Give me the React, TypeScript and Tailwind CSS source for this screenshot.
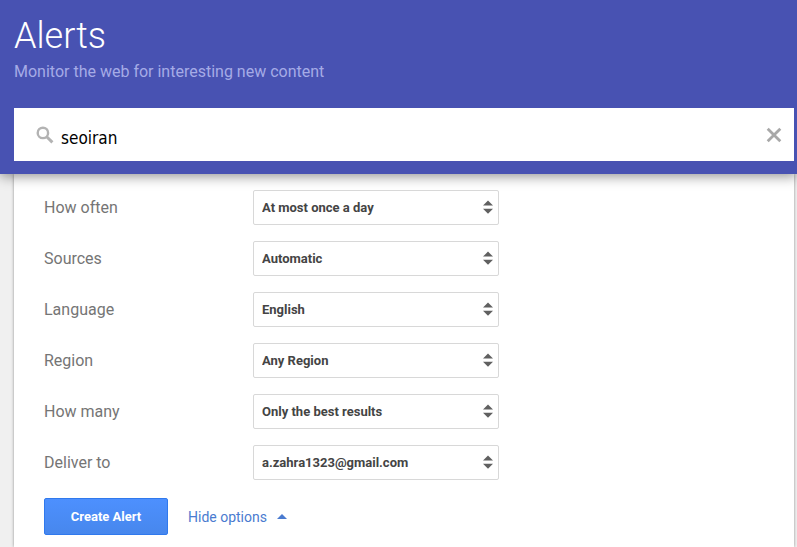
import React, { useState } from 'react';

interface AlertOption {
  id: string;
  label: string;
  choices: string[];
}

const alertOptions: AlertOption[] = [
  { id: 'frequency', label: 'How often', choices: ['At most once a day', 'As-it-happens', 'At most once a week'] },
  { id: 'sources', label: 'Sources', choices: ['Automatic', 'News', 'Blogs', 'Web', 'Video'] },
  { id: 'language', label: 'Language', choices: ['English', 'All Languages'] },
  { id: 'region', label: 'Region', choices: ['Any Region'] },
  { id: 'volume', label: 'How many', choices: ['Only the best results', 'All results'] },
  { id: 'delivery', label: 'Deliver to', choices: ['a.zahra1323@gmail.com', 'RSS feed'] },
];

function SelectArrows() {
  return (
    <svg className="pointer-events-none absolute right-1.5 top-2.5" width="10" height="14" viewBox="0 0 10 14" fill="#606060" aria-hidden="true">
      <path d="M0 5.6L5 0.6L10 5.6Z" />
      <path d="M0 8.8L5 13.8L10 8.8Z" />
    </svg>
  );
}

function OptionRow({ option }: { option: AlertOption }) {
  return (
    <div className="flex items-center">
      <label htmlFor={option.id} className="w-[209px] shrink-0 text-base text-[#757575]">{option.label}</label>
      <div className="relative w-[246px]">
        <select id={option.id} className="block h-[35px] w-full appearance-none rounded-xs border border-[#d8d8d8] bg-white pl-2 pr-6 text-[13px] font-bold text-[#444]">
          {option.choices.map((choice) => (
          <option key={choice}>{choice}</option>
          ))}
        </select>
        <SelectArrows />
      </div>
    </div>
  );
}

export default function App() {
  const [query, setQuery] = useState('seoiran');
  const [showOptions, setShowOptions] = useState(true);

  return (
    <div className="flex min-h-screen flex-col bg-[#f0f0f0] font-[Roboto,sans-serif]">
      <header className="relative bg-[#4852b2] pb-[13px] pl-3.5 pr-[3px] pt-4 shadow-[0_2px_12px_rgba(0,0,0,0.45)]">
        <h1 className="text-[36px] font-light leading-10 text-white">Alerts</h1>
        <p className="mt-1 text-base leading-6 text-[#a5abe6]">Monitor the web for interesting new content</p>
        <div className="mt-6 flex h-[53px] items-center bg-white pl-[22px] pr-3">
          <svg width="18" height="18" viewBox="0 0 18 18" fill="none" stroke="#b3b3b3" aria-hidden="true">
            <circle cx="6.9" cy="6.9" r="5.2" strokeWidth="2.4" />
            <path d="M10.7 10.7L16.4 16.4" strokeWidth="3" />
          </svg>
          <input
            type="text"
            aria-label="Create an alert about"
            value={query}
            onChange={(e) => setQuery(e.target.value)}
            className="ml-[7px] min-w-0 grow pt-1.5 font-['DejaVu_Sans_Condensed','DejaVu_Sans',sans-serif] text-[17px] leading-6 text-black outline-none"
          />
          <button type="button" aria-label="Clear" onClick={() => setQuery('')}>
            <svg width="16" height="16" viewBox="0 0 16 16" fill="none" stroke="#a8a8a8" strokeWidth="2.8" aria-hidden="true">
              <path d="M1.7 1.7L14.3 14.3M14.3 1.7L1.7 14.3" />
            </svg>
          </button>
        </div>
      </header>
      <main className="ml-3.5 mr-[3px] grow bg-white pb-3 pl-[30px] pt-4 shadow-[0_0_3px_rgba(0,0,0,0.4)]">
        {showOptions && (
        <div className="mb-[18px] flex flex-col gap-4">
          {alertOptions.map((option) => (
          <OptionRow key={option.id} option={option} />
          ))}
        </div>
        )}
        <div className="flex items-center">
          <button type="button" className="h-[37px] w-[124px] rounded-xs border border-[#3079ed] bg-linear-to-b from-[#4d90fe] to-[#4787ed] text-[13px] font-bold text-white">Create Alert</button>
          <button type="button" onClick={() => setShowOptions(!showOptions)} className="ml-5 flex items-center text-sm text-[#4a7bd0]">
            {showOptions ? 'Hide options' : 'Show options'}
            <svg className={showOptions ? 'ml-2.5' : 'ml-2.5 rotate-180'} width="10" height="5" viewBox="0 0 10 5" fill="#4a7bd0" aria-hidden="true">
              <path d="M0 5L5 0L10 5Z" />
            </svg>
          </button>
        </div>
      </main>
    </div>
  );
}
